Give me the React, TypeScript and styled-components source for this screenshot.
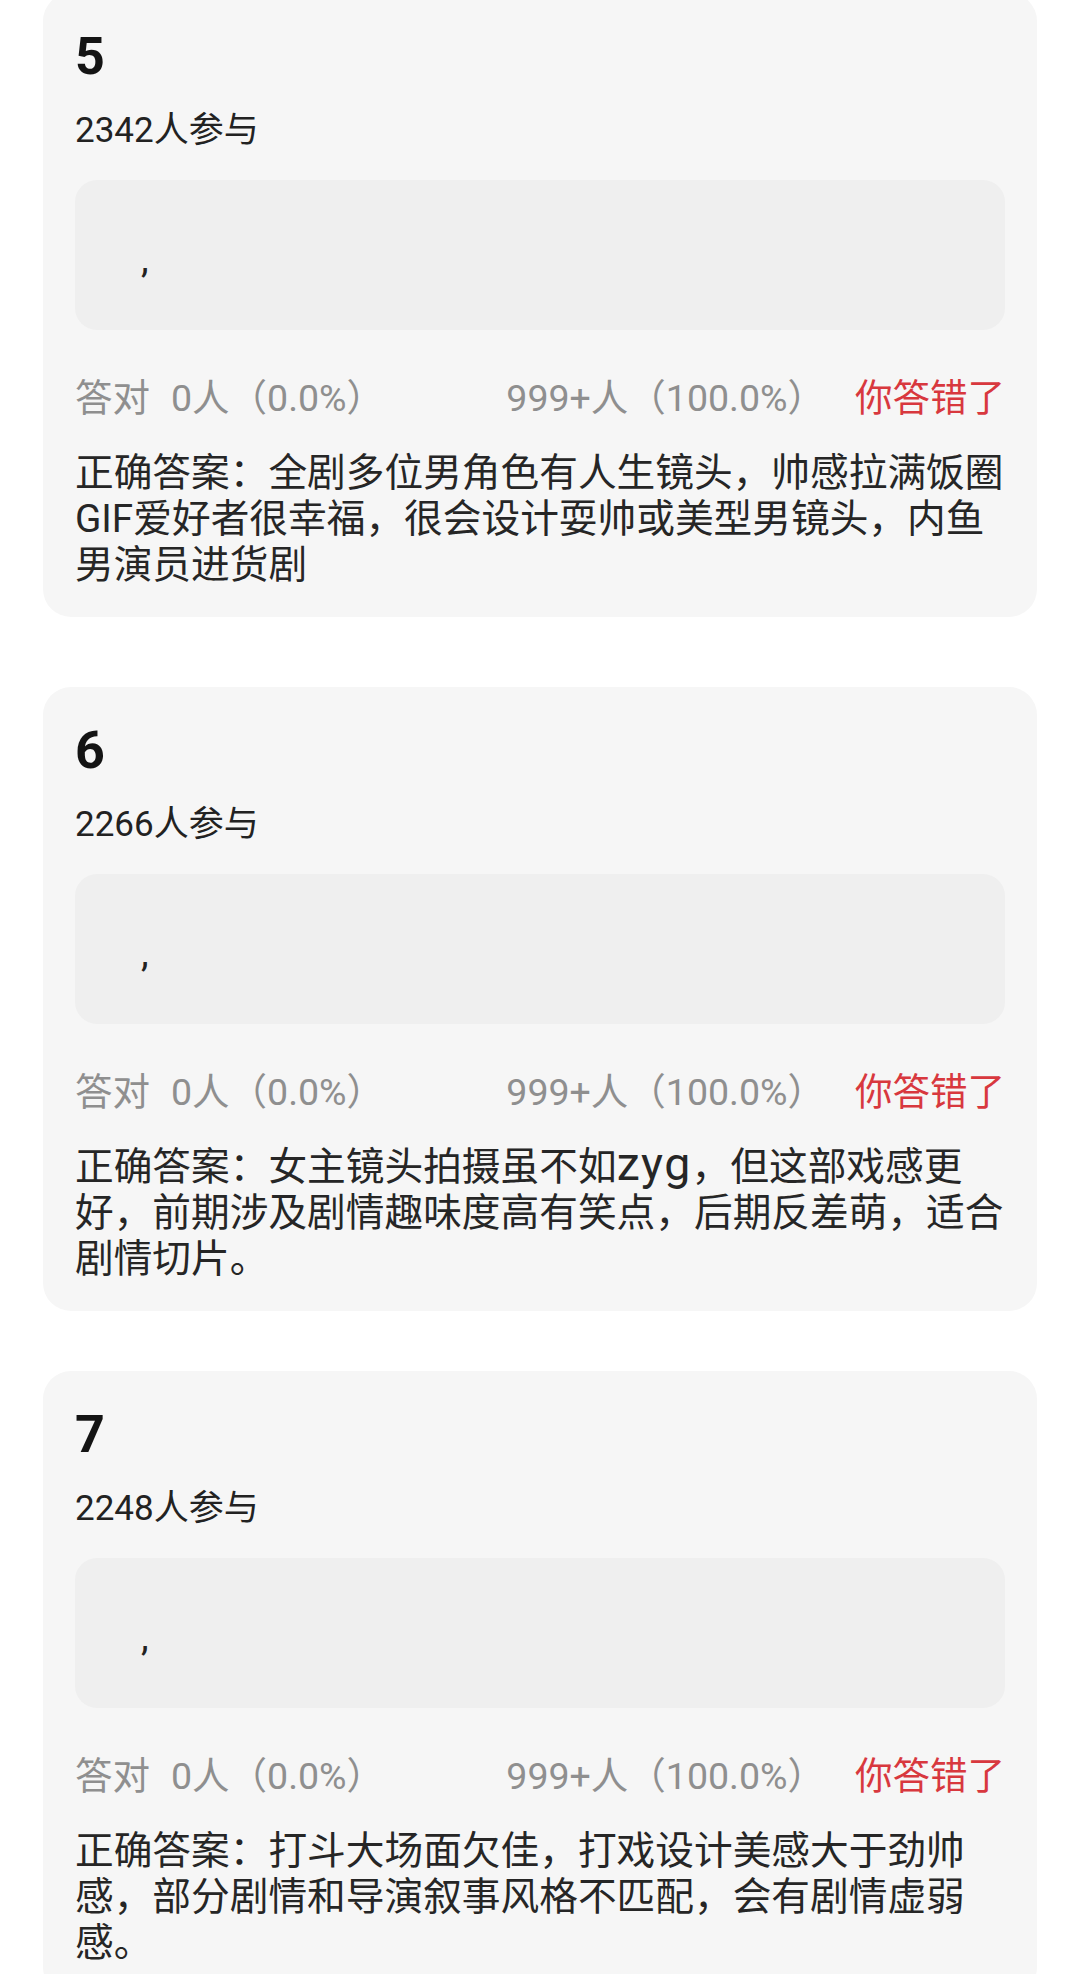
import React from 'react';
import styled, { createGlobalStyle } from 'styled-components';

const GlobalStyle = createGlobalStyle`
  html, body {
    margin: 0;
    padding: 0;
    background: #ffffff;
  }
  body {
    font-family: Roboto, "Noto Sans CJK SC", sans-serif;
    -webkit-font-smoothing: antialiased;
  }
`;

const Page = styled.main`
  width: 1080px;
  height: 1974px;
  overflow: hidden;
  box-sizing: border-box;
  padding: 0 43px;
  background: #ffffff;
  display: flex;
  flex-direction: column;
`;

const Card = styled.section<{ $space: number }>`
  flex-shrink: 0;
  margin-top: ${(p) => p.$space}px;
  background: #f6f6f6;
  border-radius: 28px;
  padding: 34px 32px 29px;
  display: flex;
  flex-direction: column;
`;

const Title = styled.h2`
  margin: 0;
  font-size: 52px;
  font-weight: 700;
  line-height: 60px;
  color: #141414;
`;

const Count = styled.div`
  margin-top: 22px;
  font-size: 35px;
  line-height: 44px;
  color: #222222;
`;

const OptionBox = styled.div`
  margin-top: 27px;
  height: 150px;
  box-sizing: border-box;
  border-radius: 22px;
  background: #efefef;
  padding: 56px 0 0 66px;
  font-size: 38.7px;
  line-height: 46px;
  color: #222222;
`;

const Stats = styled.div`
  margin-top: 44px;
  display: flex;
  align-items: baseline;
  font-size: 37.5px;
  line-height: 48px;
  color: #8f8f8f;
  white-space: nowrap;
`;

const StatValue = styled.span`
  margin-left: 21px;
`;

const RightGroup = styled.div`
  margin-left: auto;
  display: flex;
  align-items: baseline;
`;

const Verdict = styled.span`
  margin-left: 30px;
  color: #d8383e;
`;

const Answer = styled.div`
  margin-top: 28px;
  font-size: 38.7px;
  line-height: 46px;
  color: #262626;
`;

const AnswerLine = styled.span`
  display: block;
  white-space: nowrap;
`;

const Wide = styled.span`
  font-size: 1.2em;
  line-height: 0;
  letter-spacing: 0.03em;
`;

type Question = {
  no: string;
  count: string;
  space: number;
  lines: React.ReactNode[];
};

const questions: Question[] = [
  {
    no: '5',
    count: '2342人参与',
    space: -7,
    lines: [
      '正确答案：全剧多位男角色有人生镜头，帅感拉满饭圈',
      'GIF爱好者很幸福，很会设计耍帅或美型男镜头，内鱼',
      '男演员进货剧',
    ],
  },
  {
    no: '6',
    count: '2266人参与',
    space: 70,
    lines: [
      <>
        正确答案：女主镜头拍摄虽不如<Wide>zyg</Wide>，但这部戏感更
      </>,
      '好，前期涉及剧情趣味度高有笑点，后期反差萌，适合',
      '剧情切片。',
    ],
  },
  {
    no: '7',
    count: '2248人参与',
    space: 60,
    lines: [
      '正确答案：打斗大场面欠佳，打戏设计美感大于劲帅',
      '感，部分剧情和导演叙事风格不匹配，会有剧情虚弱',
      '感。',
    ],
  },
];

function QuestionCard({ q }: { q: Question }) {
  return (
    <Card $space={q.space}>
      <Title>{q.no}</Title>
      <Count>{q.count}</Count>
      <OptionBox>,</OptionBox>
      <Stats>
        <span>答对</span>
        <StatValue>0人（0.0%）</StatValue>
        <RightGroup>
          <span>999+人（100.0%）</span>
          <Verdict>你答错了</Verdict>
        </RightGroup>
      </Stats>
      <Answer>
        {q.lines.map((line, i) => (
          <AnswerLine key={i}>{line}</AnswerLine>
        ))}
      </Answer>
    </Card>
  );
}

export default function App() {
  return (
    <>
      <GlobalStyle />
      <Page>
        {questions.map((q) => (
          <QuestionCard key={q.no} q={q} />
        ))}
      </Page>
    </>
  );
}
